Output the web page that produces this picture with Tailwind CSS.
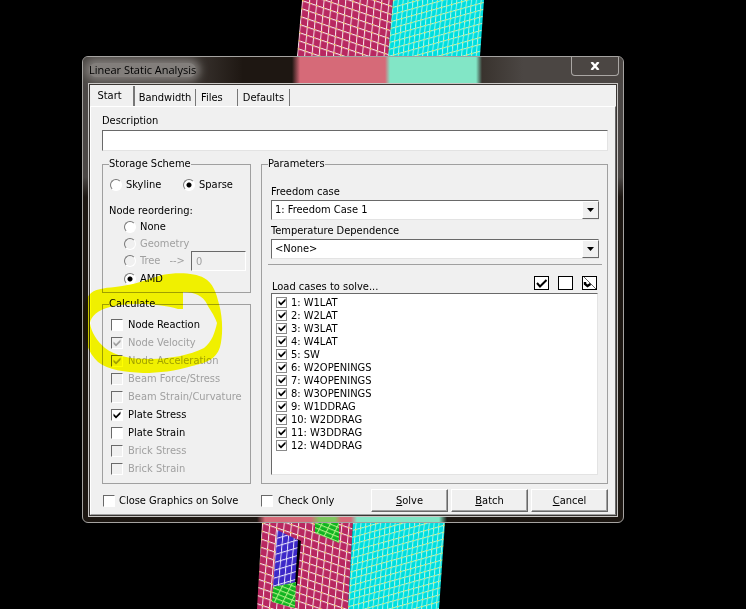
<!DOCTYPE html>
<html lang="en">
  <head>
    <meta charset="UTF-8" />
    <meta name="viewport" content="width=device-width, initial-scale=1.0" />
    <title>Linear Static Analysis</title>
    <script src="https://cdn.jsdelivr.net/npm/@tailwindcss/browser@4"></script>
  </head>
  <body class="bg-black text-black text-[11px] leading-[14px] font-['DejaVu_Sans_Condensed','DejaVu_Sans',sans-serif] [font-stretch:condensed]">
    <div class="relative min-h-screen overflow-hidden pl-[82px] pr-[122px] pt-[56px]">

      <!-- Model viewport -->
      <svg class="absolute left-0 top-0" width="746" height="609" viewBox="0 0 746 609" aria-hidden="true">
        <defs>
          <pattern id="pinkMesh" width="7" height="8" patternUnits="userSpaceOnUse" patternTransform="matrix(1 0.34 -0.09 1 302 0)">
            <rect width="7" height="8" fill="#b82860" />
            <path d="M0.5 0V8M0 0.5H7" stroke="#f8e4ec" stroke-width="1" />
            <rect width="2" height="1" fill="#f5c84a" />
          </pattern>
          <pattern id="cyanMesh" width="5" height="7" patternUnits="userSpaceOnUse" patternTransform="matrix(1 -0.28 -0.09 1 393 0)">
            <rect width="5" height="7" fill="#00dede" />
            <path d="M0.5 0V7M0 0.5H5" stroke="#a8f4ec" stroke-width="1" />
            <rect width="2" height="1" fill="#d8ee50" />
          </pattern>
          <pattern id="blueMesh" width="6" height="8" patternUnits="userSpaceOnUse" patternTransform="matrix(1 -0.3 -0.09 1 277 530)">
            <rect width="6" height="8" fill="#3c28c8" />
            <path d="M0.5 0V8M0 0.5H6" stroke="#e4e0fa" stroke-width="1" />
          </pattern>
          <pattern id="greenMesh" width="7" height="4" patternUnits="userSpaceOnUse" patternTransform="matrix(1 0.4 -0.5 1 273 587)">
            <rect width="7" height="4" fill="#10b420" />
            <path d="M0.5 0V4M0 0.5H7" stroke="#a8ec80" stroke-width="1" />
          </pattern>
        </defs>
        <path d="M302 0H393L388 56H297Z" fill="url(#pinkMesh)" />
        <path d="M393 0H484L480 56H388Z" fill="url(#cyanMesh)" />
        <path d="M262 522H353L348 609H257Z" fill="url(#pinkMesh)" />
        <path d="M353 522H445L439 609H348Z" fill="url(#cyanMesh)" />
        <path d="M315 522H339V543L315 533Z" fill="url(#greenMesh)" />
        <path d="M297 539L301 541L297 586L294 583Z" fill="#000" />
        <path d="M277 530L298 540L295 583L273 587Z" fill="url(#blueMesh)" />
        <path d="M273 587L296 582L295 608L272 602Z" fill="url(#greenMesh)" />
      </svg>

      <svg class="hidden">
        <symbol id="tick" viewBox="0 0 8 8"><path d="M0.5 2.5V5L3 7.5L7.5 3V0.5L3 5Z" /></symbol>
      </svg>

      <!-- Dialog -->
      <main class="relative overflow-hidden rounded-md border border-[#a5a3a1] bg-[linear-gradient(180deg,#4b4745_0px,#4b4745_120px,#1c1611_140px,#1c1611_100%)]">
        <header class="flex h-[26px] items-start justify-between bg-[linear-gradient(90deg,#4a4643_0px,#3a3430_110px,#1e1712_160px,#1e1712_209px,#d66a78_217px,#d66a78_302px,#82e6c6_307px,#82e6c6_393px,#39332e_399px,#4b4643_440px)]">
          <h1 class="mt-[6px] ml-[6px] rounded-full bg-[#827e7b] font-['Open_Sans',sans-serif] [font-stretch:normal] shadow-[0_0_8px_4px_#827e7b]">Linear Static Analysis</h1>
          <button type="button" aria-label="Close" class="mr-[4px] flex h-[19px] w-[48px] items-center justify-center rounded-b-[4px] border border-t-0 border-[#aaa7a4] bg-[#4b4643]">
            <svg width="10" height="8" viewBox="0 0 10 8" fill="none" stroke="#fff" stroke-width="2.4"><path d="M1.5 0L8.5 8M8.5 0L1.5 8" /></svg>
          </button>
        </header>

        <div class="relative z-10 mx-[5px] mb-[5px] border border-[#c9c7c5]">
          <div class="border border-[#3a3633] bg-[#f0f0f0]">

            <!-- Tabs -->
            <div role="tablist" class="flex h-[21px] items-end">
              <button type="button" role="tab" aria-selected="true" class="h-[20px] w-[45px] border-r-2 border-[#777] pr-[4px] text-center">Start</button>
              <button type="button" role="tab" class="h-[17px] w-[61px] border-r border-[#777] pt-px text-center">Bandwidth</button>
              <button type="button" role="tab" class="h-[17px] w-[42px] border-r border-[#777] pt-px pl-[5px] text-left">Files</button>
              <button type="button" role="tab" class="h-[17px] w-[52px] border-r border-[#777] pt-px text-center">Defaults</button>
            </div>

            <form class="border border-white border-r-[#696969] border-b-[#a0a0a0] pt-[7px] pr-[7px] pb-[2px] pl-[11px]">
              <label for="description" class="block">Description</label>
              <input id="description" type="text" class="mt-[2px] mb-[6px] block h-[21px] w-full border border-[#e3e3e3] border-t-[#696969] border-l-[#696969] bg-white px-1 outline-none" />

              <div class="grid grid-cols-[149px_1fr] gap-x-[10px]">
                <div class="flex flex-col gap-[4px]">
                  <fieldset class="border border-[#a0a0a0] pr-[4px] pl-[6px] pb-[5px]">
                    <legend>Storage Scheme</legend>
                    <div class="flex h-[24px] items-end pb-[3px]">
                      <label class="flex w-[74px] items-center gap-[4px]"><input type="radio" name="scheme" class="size-3 appearance-none rounded-full border border-white border-t-[#777] border-l-[#777] bg-white ml-px" />Skyline</label>
                      <label class="flex items-center gap-[4px]"><input type="radio" name="scheme" checked class="size-3 appearance-none rounded-full border border-white border-t-[#777] border-l-[#777] bg-white bg-[radial-gradient(circle,#000_2px,transparent_3px)]" />Sparse</label>
                    </div>
                    <p class="mt-[9px]">Node reordering:</p>
                    <div class="pl-[15px]">
                      <label class="flex h-[17px] items-center gap-[4px]"><input type="radio" name="order" class="size-3 appearance-none rounded-full border border-white border-t-[#777] border-l-[#777] bg-white" />None</label>
                      <label class="flex h-[17px] items-center gap-[4px] text-[#a0a0a0]"><input type="radio" name="order" disabled class="size-3 appearance-none rounded-full border border-white border-t-[#777] border-l-[#777]" />Geometry</label>
                      <div class="flex h-[18px] items-center text-[#a0a0a0]">
                        <label class="flex w-[67px] items-center gap-[4px]"><input type="radio" name="order" disabled class="size-3 appearance-none rounded-full border border-white border-t-[#777] border-l-[#777]" />Tree <span class="ml-[5px]">--&gt;</span></label>
                        <input type="text" value="0" disabled aria-label="Tree start node" class="h-[20px] w-[55px] border border-white border-t-[#696969] border-l-[#696969] bg-[#f0f0f0] px-[4px]" />
                      </div>
                      <label class="flex h-[17px] items-center gap-[4px]"><input type="radio" name="order" checked class="size-3 appearance-none rounded-full border border-white border-t-[#777] border-l-[#777] bg-white bg-[radial-gradient(circle,#000_2px,transparent_3px)]" />AMD</label>
                    </div>
                  </fieldset>

                  <fieldset class="border border-[#a0a0a0] px-[6px] pt-[5px] pb-[5px]">
                    <legend>Calculate</legend>
                    <div id="calculate"></div>
                  </fieldset>
                </div>

                <fieldset class="min-w-0 border border-[#a0a0a0] pr-[8px] pl-[9px] pb-[8px]">
                  <legend class="-ml-[3px]">Parameters</legend>
                  <label for="freedom" class="mt-[14px] block">Freedom case</label>
                  <div class="relative mt-[1px]">
                    <select id="freedom" class="block h-[20px] w-full appearance-none border border-[#e3e3e3] border-t-[#696969] border-l-[#696969] bg-white pl-[3px] outline-none">
                      <option>1: Freedom Case 1</option>
                    </select>
                    <span class="pointer-events-none absolute top-px right-0 bottom-px flex w-[17px] items-center justify-center border border-white border-r-[#696969] border-b-[#696969] bg-[#f0f0f0]"><svg width="7" height="4" viewBox="0 0 7 4"><path d="M0 0H7L3.5 4Z" /></svg></span>
                  </div>
                  <label for="temperature" class="mt-[4px] block">Temperature Dependence</label>
                  <div class="relative mt-[1px]">
                    <select id="temperature" class="block h-[20px] w-full appearance-none border border-[#e3e3e3] border-t-[#696969] border-l-[#696969] bg-white pl-[3px] outline-none">
                      <option>&lt;None&gt;</option>
                    </select>
                    <span class="pointer-events-none absolute top-px right-0 bottom-px flex w-[17px] items-center justify-center border border-white border-r-[#696969] border-b-[#696969] bg-[#f0f0f0]"><svg width="7" height="4" viewBox="0 0 7 4"><path d="M0 0H7L3.5 4Z" /></svg></span>
                  </div>
                  <hr class="-mx-[3px] mt-[5px] border-t-[#a0a0a0]" />
                  <div class="mt-[11px] mr-[2px] flex h-[17px] items-start justify-between">
                    <h2 class="mt-[4px] ml-px">Load cases to solve...</h2>
                    <div class="flex gap-[9px]">
                      <button type="button" aria-label="Select all" class="flex h-[14px] w-[15px] items-center justify-center border border-black bg-white"><svg width="11" height="9" viewBox="0 0 11 9" fill="none" stroke="#000" stroke-width="2"><path d="M1 4L4 7.5L10.5 1" /></svg></button>
                      <button type="button" aria-label="Clear all" class="h-[14px] w-[15px] border border-black bg-white"></button>
                      <button type="button" aria-label="Invert selection" class="flex h-[14px] w-[15px] items-center justify-center border border-black bg-white"><svg width="13" height="12" viewBox="0 0 13 12" fill="none" stroke="#000"><path d="M2 5V7L4.5 9L7.5 7" stroke-width="2.4" /><path d="M1 0L13 12" stroke-width="0.6" /></svg></button>
                    </div>
                  </div>
                  <ul id="loadCases" class="mr-px h-[182px] overflow-hidden border border-[#e3e3e3] border-t-[#696969] border-l-[#696969] bg-white pt-[2px] pl-[4px]"></ul>
                </fieldset>
              </div>

              <div class="mt-[5px] grid grid-cols-[149px_1fr] gap-x-[10px]">
                <label class="flex items-center gap-[4px] pl-px pt-px whitespace-nowrap"><input type="checkbox" class="size-3 appearance-none border border-white border-t-[#696969] border-l-[#696969] bg-white" />Close Graphics on Solve</label>
                <div class="flex items-center justify-between">
                  <label class="flex items-center gap-[5px] pt-px"><input type="checkbox" class="size-3 appearance-none border border-white border-t-[#696969] border-l-[#696969] bg-white" />Check Only</label>
                  <div class="flex gap-[3px]">
                    <button type="submit" class="h-[23px] w-[77px] border border-white border-r-[#696969] border-b-[#696969] shadow-[inset_-1px_-1px_0_#a0a0a0]"><u>S</u>olve</button>
                    <button type="button" class="h-[23px] w-[77px] border border-white border-r-[#696969] border-b-[#696969] shadow-[inset_-1px_-1px_0_#a0a0a0]"><u>B</u>atch</button>
                    <button type="button" class="h-[23px] w-[77px] border border-white border-r-[#696969] border-b-[#696969] shadow-[inset_-1px_-1px_0_#a0a0a0]"><u>C</u>ancel</button>
                  </div>
                </div>
              </div>
            </form>
          </div>
        </div>
        <div class="absolute inset-x-[6px] bottom-0 h-[5px] bg-[linear-gradient(90deg,#1c1611_168px,#d66a78_176px,#d66a78_222px,#7fc860_230px,#7fc860_246px,#d66a78_252px,#d66a78_262px,#82e6c6_268px,#82e6c6_350px,#1c1611_358px)]"></div>
      </main>

      <!-- Highlighter stroke -->
      <svg class="pointer-events-none absolute left-0 top-0 z-20 mix-blend-multiply" width="746" height="609" viewBox="0 0 746 609" aria-hidden="true">
        <path fill="#ffff00" d="M89 295C94 289 104 288 115 287C135 285 148 279 162 275C178 272 195 273 204 278C213 283 216 292 219 304C223 318 223 336 220 347C216 360 205 363 192 366C175 371 160 373 143 373C125 372 108 370 98 362C88 353 83 338 83 322C83 309 84 301 89 295Z
          M183 292V309H178C160 304 130 302 110 307C98 310 91 316 90 323C91 332 97 341 105 348C115 356 130 359 150 359C170 359 190 355 204 348C212 342 215 332 217 323C214 314 209 309 207 304C203 296 195 292 183 292Z" fill-rule="evenodd" />
      </svg>
    </div>

    <script>
      const calculate = [
        { label: "Node Reaction" },
        { label: "Node Velocity", checked: true, disabled: true },
        { label: "Node Acceleration", checked: true, disabled: true },
        { label: "Beam Force/Stress", disabled: true },
        { label: "Beam Strain/Curvature", disabled: true },
        { label: "Plate Stress", checked: true },
        { label: "Plate Strain" },
        { label: "Brick Stress", disabled: true },
        { label: "Brick Strain", disabled: true },
      ];

      const loadCases = ["W1LAT", "W2LAT", "W3LAT", "W4LAT", "SW", "W2OPENINGS", "W4OPENINGS", "W3OPENINGS", "W1DDRAG", "W2DDRAG", "W3DDRAG", "W4DDRAG"];

      document.getElementById("calculate").innerHTML = calculate.map((item) => `
        <label class="flex h-[18px] items-center gap-[5px] pl-[2px] whitespace-nowrap ${item.disabled ? "text-[#a0a0a0]" : ""}">
          <span class="relative">
            <input type="checkbox" ${item.checked ? "checked" : ""} ${item.disabled ? "disabled" : ""} class="peer block size-3 appearance-none border border-white border-t-[#696969] border-l-[#696969] bg-white disabled:bg-[#f0f0f0]" />
            <svg class="absolute top-[2px] left-[2px] hidden size-2 peer-checked:block" fill="currentColor"><use href="#tick" /></svg>
          </span>${item.label}
        </label>`).join("");

      document.getElementById("loadCases").innerHTML = loadCases.map((name, i) => `
        <li>
          <label class="flex h-[13px] items-center gap-[4px]">
            <span class="relative">
              <input type="checkbox" checked class="peer block size-[11px] appearance-none border border-[#8a8a8a] bg-white" />
              <svg class="absolute top-[1px] left-[2px] hidden size-2 peer-checked:block"><use href="#tick" /></svg>
            </span>${i + 1}: ${name}
          </label>
        </li>`).join("");
    </script>
  </body>
</html>
